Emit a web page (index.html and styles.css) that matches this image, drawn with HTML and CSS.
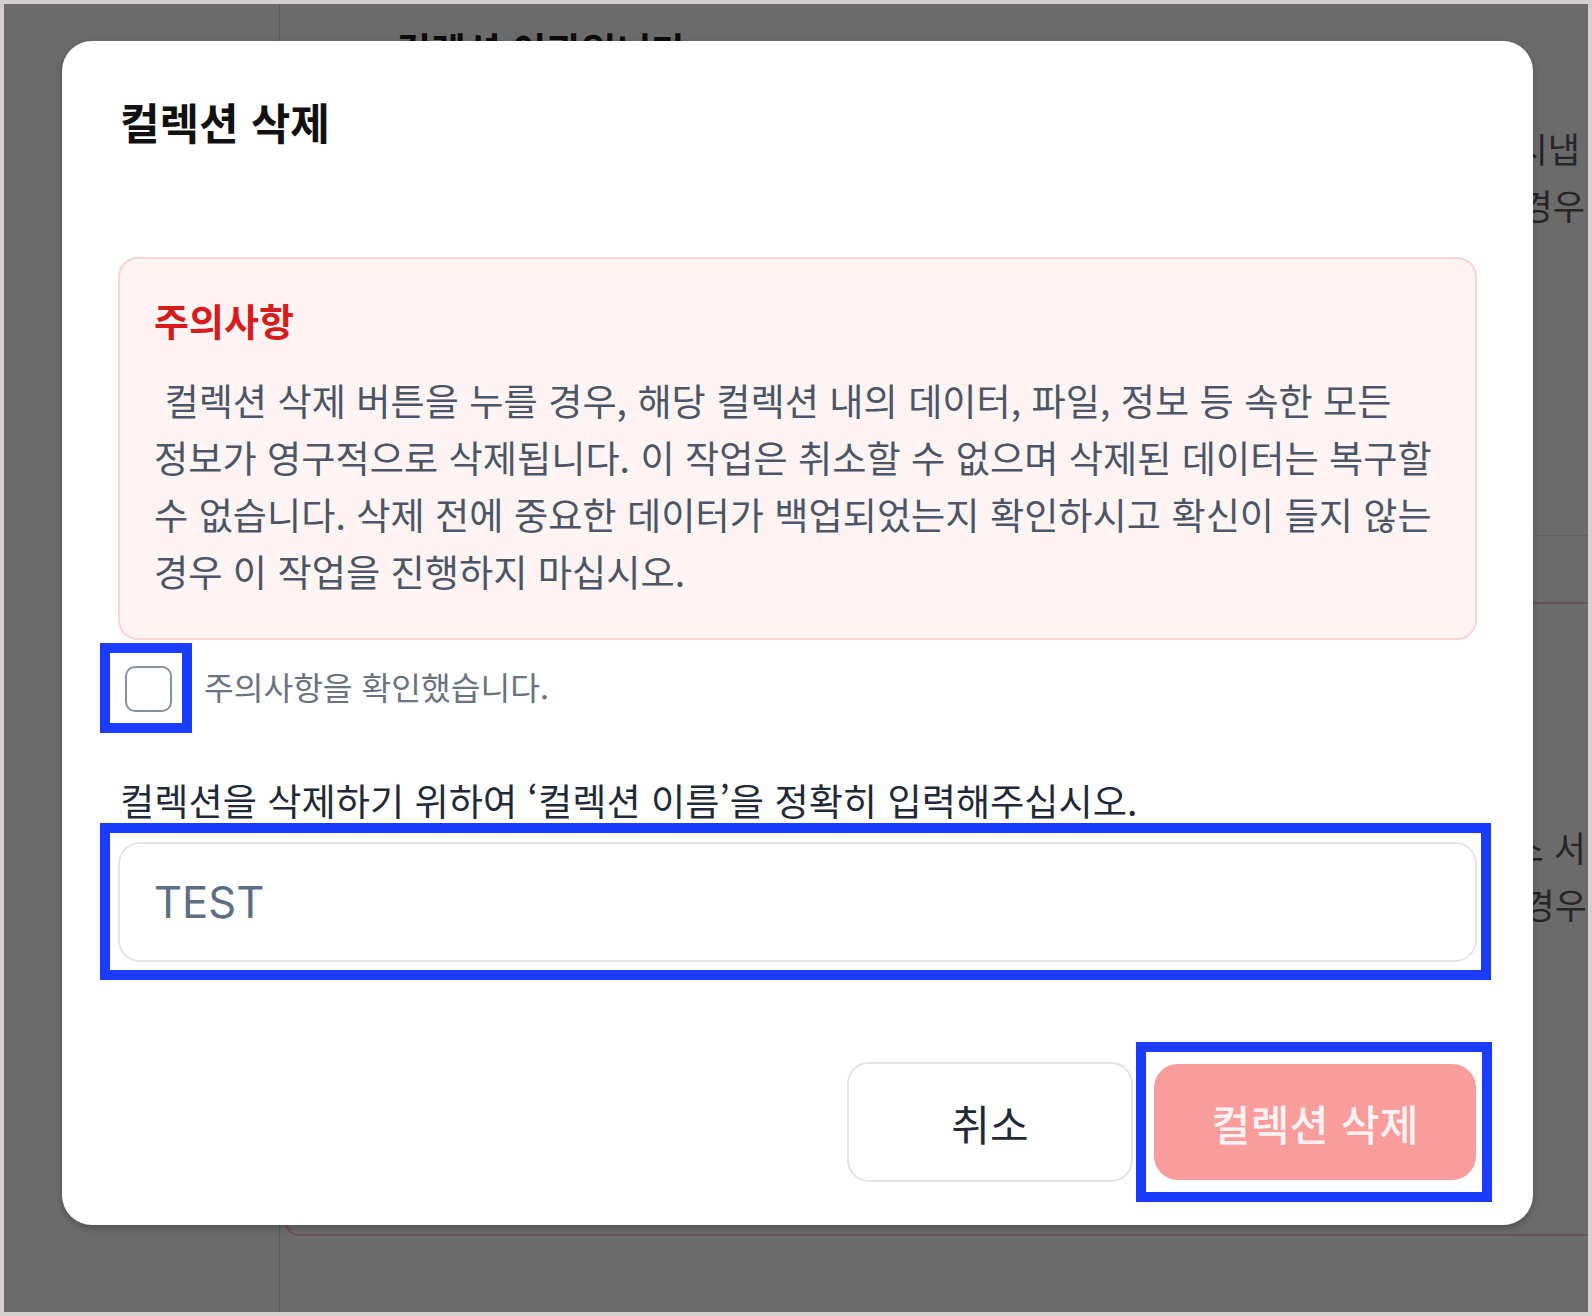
FILE: index.html
```html
<!DOCTYPE html>
<html lang="ko">
<head>
<meta charset="utf-8">
<title>컬렉션 삭제</title>
<link rel="stylesheet" href="styles.css">
</head>
<body>
<div class="frame">
  <div class="page">
    <aside class="sidebar"></aside>
    <main class="main">
      <h1 class="page-title">컬렉션 이관입니다</h1>
      <section class="bg-card">
        <p class="bg-line l1">컬렉션을 이관하려면 시냅</p>
        <p class="bg-line l2">권한이 없는 경우</p>
      </section>
      <section class="bg-warn">
        <p class="bg-line l3">이관된 데이터는 클라우드 스 서</p>
        <p class="bg-line l4">소유자가 아닌 경우</p>
      </section>
    </main>
  </div>

  <div class="overlay">
    <div class="modal" role="dialog" aria-labelledby="modal-title">
      <h2 class="modal-title" id="modal-title">컬렉션 삭제</h2>

      <div class="notice">
        <h3 class="notice-title">주의사항</h3>
        <p class="notice-text">&nbsp;컬렉션 삭제 버튼을 누를 경우, 해당 컬렉션 내의 데이터, 파일, 정보 등 속한 모든<br>정보가 영구적으로 삭제됩니다. 이 작업은 취소할 수 없으며 삭제된 데이터는 복구할<br>수 없습니다. 삭제 전에 중요한 데이터가 백업되었는지 확인하시고 확신이 들지 않는<br>경우 이 작업을 진행하지 마십시오.</p>
      </div>

      <label class="agree">
        <span class="mark mark-check"><input type="checkbox" class="check"></span>
        <span class="agree-text">주의사항을 확인했습니다.</span>
      </label>

      <p class="field-label">컬렉션을 삭제하기 위하여 ‘컬렉션 이름’을 정확히 입력해주십시오.</p>
      <div class="mark mark-input">
        <input class="name-input" type="text" placeholder="TEST">
      </div>

      <div class="actions">
        <button class="btn btn-cancel" type="button">취소</button>
        <button class="btn btn-delete mark mark-btn" type="button" disabled>컬렉션 삭제</button>
      </div>
    </div>
  </div>
</div>
</body>
</html>
```

FILE: styles.css
```css
* {
  box-sizing: border-box;
}

html,
body {
  margin: 0;
  padding: 0;
  background: #d3cfcf;
}

body {
  font-family: "Noto Sans CJK KR", "Inter", sans-serif;
}

.frame {
  position: relative;
  width: 1592px;
  height: 1316px;
  border: 4px solid #d3cfcf;
  overflow: hidden;
}

/* ---------- page behind the dialog ---------- */
.page {
  display: grid;
  grid-template-columns: 276px 1fr;
  height: 100%;
  background: #ffffff;
}

.sidebar {
  border-right: 1px solid #d8d8d8;
}

.main {
  display: flex;
  flex-direction: column;
  min-width: 0;
}

.page-title {
  margin: 11px 0 0 116px;
  font-size: 38px;
  line-height: 68px;
  font-weight: 700;
  color: #1e1e1e;
  white-space: nowrap;
}

.bg-card {
  height: 453px;
  padding-top: 36px;
  border-bottom: 1px solid #e4e4e4;
}

.bg-warn {
  height: 634px;
  margin: 66px -40px 0 5px;
  padding-top: 214px;
  border: 2px solid #f4c6c6;
  border-radius: 14px;
}

.bg-line {
  margin: 0;
  font-size: 35px;
  line-height: 57px;
  color: #5c5c5c;
  text-align: right;
  white-space: nowrap;
}

.l1 { margin-right: 8px; }
.l2 { margin-right: 3px; }
.l3 { margin-right: 40px; }
.l4 { margin-right: 39px; }

/* ---------- overlay & dialog ---------- */
.overlay {
  position: absolute;
  inset: 0;
  display: flex;
  justify-content: center;
  align-items: flex-start;
  padding: 37px 0 0 3px;
  background: rgba(0, 0, 0, 0.58);
}

.modal {
  width: 1471px;
  padding: 52px 56px 43px;
  background: #ffffff;
  border-radius: 30px;
  box-shadow: 0 3px 6px rgba(0, 0, 0, 0.25);
}

.modal-title {
  margin: 0 0 108px;
  padding-left: 2px;
  font-size: 43px;
  line-height: 56px;
  font-weight: 700;
  color: #111111;
}

.notice {
  padding: 32px 34px 38px;
  background: #fef4f4;
  border: 2px solid #fbd4d4;
  border-radius: 20px;
}

.notice-title {
  margin: 0 0 24px;
  font-size: 38px;
  line-height: 57px;
  font-weight: 700;
  color: #d61c1c;
}

.notice-text {
  margin: 0;
  font-size: 37.2px;
  line-height: 57px;
  color: #4b5565;
  white-space: nowrap;
}

.agree {
  display: flex;
  align-items: center;
  gap: 32px;
  margin-top: 26px;
  padding-left: 7px;
}

.check {
  appearance: none;
  display: block;
  width: 47px;
  height: 46px;
  margin: 0;
  background: #ffffff;
  border: 2px solid #8a929e;
  border-radius: 10px;
}

.agree-text {
  margin-top: -6px;
  font-size: 32.3px;
  line-height: 46px;
  color: #6b7280;
}

.field-label {
  margin: 60px 0 13px;
  padding-left: 2px;
  font-size: 37.2px;
  line-height: 57px;
  color: #1f2937;
}

.name-input {
  display: block;
  width: 100%;
  height: 120px;
  padding: 0 34px;
  font-family: "Inter", "Noto Sans CJK KR", sans-serif;
  font-size: 43.5px;
  color: #5b6b80;
  background: #ffffff;
  border: 2px solid #e1e5ea;
  border-radius: 22px;
  outline: none;
}

.name-input::placeholder {
  color: #5d6d83;
  opacity: 1;
}

.actions {
  display: flex;
  justify-content: flex-end;
  align-items: center;
  gap: 21px;
  margin-top: 100px;
  padding-right: 1px;
}

.btn {
  font-family: "Noto Sans CJK KR", "Inter", sans-serif;
  font-size: 42px;
  border-radius: 22px;
  cursor: pointer;
}

.btn-cancel {
  width: 286px;
  height: 120px;
  font-weight: 400;
  color: #1f2937;
  background: #ffffff;
  border: 2px solid #dfe3e8;
}

.btn-delete {
  width: 322px;
  height: 116px;
  font-size: 42.5px;
  font-weight: 500;
  color: #fdf2f2;
  background: #f99c9c;
  border: none;
  border-radius: 24px;
}

/* ---------- blue annotation frames ---------- */
.mark {
  position: relative;
  display: block;
}

.mark::after {
  content: "";
  position: absolute;
  border: 10px solid #1a3cff;
  pointer-events: none;
}

.mark-check::after {
  top: -23px;
  left: -25px;
  right: -20px;
  bottom: -21px;
}

.mark-input::after {
  top: -19px;
  left: -18px;
  right: -14px;
  bottom: -18px;
}

.mark-btn::after {
  top: -22px;
  left: -18px;
  right: -16px;
  bottom: -22px;
}
```
